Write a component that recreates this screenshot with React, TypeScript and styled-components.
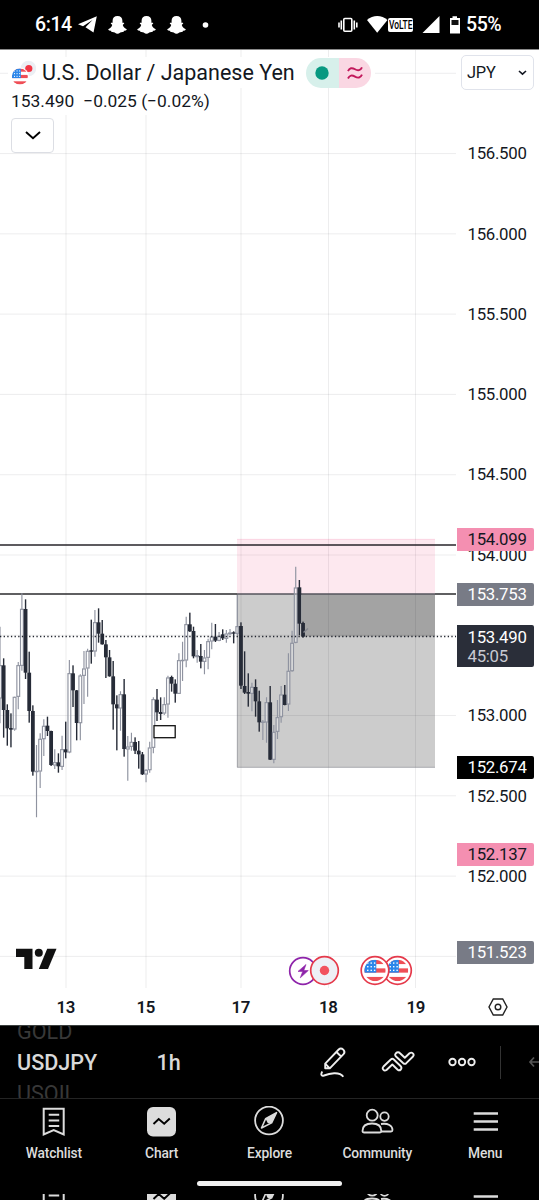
import React from 'react';
import styled, { createGlobalStyle } from 'styled-components';

const GlobalStyle = createGlobalStyle`
  * { box-sizing: border-box; }
  body { margin: 0; background: #000; font-family: Roboto, "Liberation Sans", sans-serif; }
  svg { display: block; flex: none; }
`;

const Screen = styled.main`
  width: 539px;
  height: 1200px;
  display: flex;
  flex-direction: column;
  overflow: hidden;
  background: #000;
`;

const StatusBar = styled.header`
  height: 50px;
  flex: none;
  display: flex;
  align-items: center;
  justify-content: space-between;
  padding: 0 38px 0 35px;
  border-bottom: 1px solid #8a8a8a;
  color: #fff;
`;

const StatusGroup = styled.div<{ $gap: number }>`
  display: flex;
  align-items: center;
  gap: ${p => p.$gap}px;
`;

const StatusText = styled.span<{ $width: number }>`
  width: ${p => p.$width}px;
  font-weight: 500;
  font-size: 19.5px;
  letter-spacing: -0.4px;
  white-space: nowrap;
`;

const VolteBadge = styled.span`
  width: 25px;
  height: 14px;
  margin-left: -3px;
  border-radius: 2px;
  background: #fff;
  color: #000;
  display: flex;
  align-items: center;
  justify-content: center;
`;

const VolteText = styled.span`
  font: 500 12px/14px Roboto, sans-serif;
  transform: scaleX(0.7);
`;

const Chart = styled.section`
  position: relative;
  height: 975px;
  flex: none;
  display: grid;
  grid-template: 938px 37px / 456px 83px;
  background: #fff;
  color: #131722;
`;

const PriceAxis = styled.div`
  position: relative;
  padding-top: 63.4px;
  overflow: hidden;
`;

const PriceLabel = styled.div`
  height: 80.28px;
  padding-left: 11.5px;
  font-size: 16.8px;
  line-height: 80.28px;
  letter-spacing: -0.28px;
`;

const PriceTag = styled.div<{ $top: number; $bg: string; $color: string; $tall?: boolean }>`
  position: absolute;
  left: 1px;
  top: ${p => p.$top}px;
  width: 77px;
  height: ${p => (p.$tall ? 42 : 23)}px;
  padding: ${p => (p.$tall ? 2 : 1)}px 0 0 10.5px;
  border-radius: 0 2px 2px 0;
  background: ${p => p.$bg};
  color: ${p => p.$color};
  font-size: 16.8px;
  line-height: 21px;
  letter-spacing: -0.28px;
`;

const Countdown = styled.div`
  color: #c8cad2;
  line-height: 17px;
  font-size: 16.8px;
`;

const CurrencySelect = styled.button`
  position: absolute;
  left: 461px;
  top: 5px;
  width: 73px;
  height: 35px;
  padding: 0 6px 0 5px;
  display: flex;
  align-items: center;
  justify-content: space-between;
  border: 1px solid #e0e3eb;
  border-radius: 5px;
  background: #fff;
  color: #131722;
  font: 400 16.4px Roboto, sans-serif;
  letter-spacing: -0.2px;
`;

const Legend = styled.div`
  position: absolute;
  left: 8px;
  top: 7px;
  display: flex;
  flex-direction: column;
  align-items: flex-start;
`;

const LegendTitle = styled.div`
  height: 31px;
  display: flex;
  align-items: center;
  padding: 0 4px 0 3px;
  background: #fff;
`;

const SymbolName = styled.span`
  width: 270px;
  padding-left: 6px;
  font-size: 21.5px;
  white-space: nowrap;
`;

const StatusPill = styled.div`
  display: flex;
  width: 65px;
  height: 30px;
  border-radius: 15px;
  overflow: hidden;
`;

const PillHalf = styled.span<{ $bg: string }>`
  flex: 1;
  display: flex;
  align-items: center;
  justify-content: center;
  background: ${p => p.$bg};
`;

const Quote = styled.div`
  height: 27px;
  display: flex;
  gap: 9px;
  padding: 0 4px 0 3px;
  background: #fff;
  font-size: 17.4px;
  line-height: 27px;
  white-space: nowrap;
`;

const CollapseButton = styled.button`
  margin: 3px 0 0 3px;
  width: 43px;
  height: 35px;
  padding: 0;
  display: flex;
  align-items: center;
  justify-content: center;
  border: 1px solid #dcdee4;
  border-radius: 4px;
  background: #fff;
`;

const TimeAxis = styled.div`
  display: grid;
  grid-template-columns: 106px 87.5px 91px 87.5px 84px;
  font-size: 16.8px;
  font-weight: 600;
  line-height: 39px;
  letter-spacing: -0.4px;
`;

const TimeLabel = styled.span<{ $pad: number }>`
  padding-left: ${p => p.$pad}px;
`;

const AxisCorner = styled.div`
  display: flex;
  align-items: center;
  justify-content: center;
`;

const Toolbar = styled.div`
  height: 73px;
  flex: none;
  display: flex;
  align-items: center;
  border-top: 1px solid #3a3f3e;
  color: #d9d9d9;
  overflow: hidden;
`;

const SymbolWheel = styled.div`
  flex: none;
  width: 139px;
  height: 72px;
  padding-left: 17px;
  display: flex;
  flex-direction: column;
  justify-content: center;
  overflow: hidden;
`;

const WheelItem = styled.div<{ $active?: boolean }>`
  flex: none;
  height: 31px;
  font-size: 21.6px;
  line-height: 31px;
  font-weight: ${p => (p.$active ? 500 : 400)};
  color: ${p => (p.$active ? '#d9d9d9' : '#383838')};
`;

const Interval = styled.div`
  flex: none;
  width: 181px;
  padding-left: 17.5px;
  font-size: 21.6px;
  font-weight: 500;
`;

const Tools = styled.div`
  flex: none;
  display: flex;
  align-items: center;
  gap: 33.5px;
`;

const Divider = styled.span`
  flex: none;
  width: 1px;
  height: 33px;
  margin: 0 27px 0 24px;
  background: #333;
`;

const Nav = styled.nav`
  height: 102px;
  flex: none;
  display: flex;
  flex-direction: column;
  border-top: 1px solid #242424;
  color: #dcdcdc;
`;

const NavRow = styled.div`
  display: grid;
  grid-template-columns: repeat(5, 1fr);
  height: 82px;
  flex: none;
  padding-top: 7px;
`;

const NavItem = styled.div`
  display: flex;
  flex-direction: column;
  align-items: center;
`;

const NavLabel = styled.span`
  margin-top: 5px;
  font-size: 13.8px;
  font-weight: 500;
  line-height: 20px;
  letter-spacing: -0.15px;
`;

const HomeBar = styled.div`
  width: 145px;
  height: 5px;
  flex: none;
  margin: 0 auto;
  border-radius: 3px;
  background: #f0f0f0;
`;

const NavEcho = styled.div`
  height: 6px;
  margin-top: 8px;
  overflow: hidden;
`;

const EchoRow = styled.div`
  display: grid;
  grid-template-columns: repeat(5, 1fr);
  justify-items: center;
  margin-top: -13px;
`;

/* Each candle: direction (1 rising, 0 falling), high, body top, body bottom, low. */
type Candle = [number, number, number, number, number];
const sessions: { base: number; candles: Candle[] }[] = [
  {
    base: 560,
    candles: [
      [1, 200, 316, 415, 490], [0, 295, 316, 450, 533], [0, 433, 450, 505, 557], [0, 460, 504, 509, 562],
      [1, 410, 411, 508, 512], [1, 306, 316, 410, 448], [1, 100, 147, 317, 332], [0, 118, 147, 338, 357],
      [0, 275, 338, 453, 488], [0, 436, 453, 635, 647], [1, 555, 633, 636, 772], [1, 520, 537, 634, 684],
      [1, 478, 498, 537, 588], [0, 470, 497, 513, 528], [0, 512, 513, 615, 618], [1, 568, 607, 616, 627],
      [0, 580, 607, 619, 638], [1, 527, 568, 620, 630], [0, 485, 568, 577, 595], [1, 300, 340, 577, 580],
      [0, 316, 340, 391, 441], [0, 390, 391, 489, 541], [1, 343, 347, 489, 541], [1, 273, 326, 347, 432],
      [1, 266, 273, 325, 410], [0, 179, 271, 275, 311], [1, 150, 187, 274, 290], [0, 145, 187, 221, 248],
      [0, 180, 221, 253, 254], [0, 240, 253, 292, 354], [0, 270, 292, 349, 350], [0, 303, 349, 433, 509],
      [0, 406, 433, 445, 571], [1, 394, 403, 445, 512],
    ],
  },
  {
    base: 580,
    candles: [
      [0, 297, 343, 507, 530], [1, 468, 500, 508, 602], [1, 458, 486, 500, 512], [0, 472, 486, 512, 522],
      [0, 483, 512, 523, 566], [0, 516, 523, 583, 585], [1, 568, 570, 583, 607], [1, 485, 503, 570, 578],
      [1, 352, 358, 503, 520], [0, 327, 359, 397, 423], [0, 352, 396, 402, 420], [1, 352, 373, 400, 405],
      [1, 287, 293, 373, 413], [0, 287, 291, 311, 335], [0, 298, 311, 341, 368], [1, 220, 241, 341, 342],
      [1, 185, 240, 242, 303], [1, 110, 133, 241, 262], [0, 98, 133, 154, 156], [0, 140, 153, 229, 235],
      [1, 210, 226, 231, 248], [0, 192, 228, 245, 265], [1, 210, 233, 245, 283], [1, 176, 184, 233, 268],
      [1, 128, 170, 184, 208], [0, 132, 170, 182, 186], [1, 156, 168, 182, 184], [0, 148, 163, 175, 180],
      [1, 150, 161, 176, 188], [1, 147, 158, 162, 165], [0, 154, 157, 161, 190], [1, 45, 139, 161, 165],
    ],
  },
  {
    base: 520,
    candles: [
      [0, 307, 318, 497, 507], [0, 394, 498, 518, 522], [0, 460, 516, 521, 560], [1, 488, 501, 521, 574],
      [0, 478, 501, 544, 590], [0, 512, 544, 607, 635], [1, 600, 605, 608, 660], [1, 532, 547, 607, 668],
      [0, 498, 547, 719, 720], [1, 615, 636, 719, 730], [1, 540, 592, 635, 657], [1, 498, 524, 591, 608],
      [0, 495, 524, 555, 556], [1, 400, 453, 553, 573], [1, 332, 369, 453, 455], [1, 140, 203, 368, 370],
      [0, 180, 202, 311, 346], [0, 305, 309, 350, 353],
    ],
  },
];

const candles = sessions.flatMap(s =>
  s.candles.map(([up, ...ys]) => ({ up: up === 1, ys: ys.map(y => s.base + y / 3) })),
);
const STEP = 3.651;

function Candles() {
  return (
    <g>
      {candles.map(({ up, ys: [high, top, bottom, low] }, i) => {
        const x = i * STEP;
        return up ? (
          <g key={i} stroke="#8f93a0" strokeWidth="1.15" fill="none">
            <path d={`M${x} ${high}V${top}M${x} ${bottom}V${low}`} />
            <rect x={x - 1.4} y={top + 0.3} width={2.8} height={Math.max(bottom - top - 0.6, 0.4)} fill="#ffffff55" />
          </g>
        ) : (
          <g key={i} fill="#262b37">
            <rect x={x - 0.7} y={high} width={1.4} height={low - high} />
            <rect x={x - 1.9} y={top} width={3.8} height={Math.max(bottom - top, 1.3)} />
          </g>
        );
      })}
    </g>
  );
}

function UsFlag({ x, y, r }: { x: number; y: number; r: number }) {
  const id = `us-${x}-${y}`;
  const s = (2 * r) / 5;
  return (
    <g>
      <clipPath id={id}><circle cx={x} cy={y} r={r} /></clipPath>
      <g clipPath={`url(#${id})`}>
        <rect x={x - r} y={y - r} width={2 * r} height={2 * r} fill="#fff" />
        {[0, 2, 4].map(n => (
          <rect key={n} x={x - r} y={y - r + n * s} width={2 * r} height={s} fill="#ef4e56" />
        ))}
        <rect x={x - r} y={y - r} width={r * 1.12} height={3 * s} fill="#2b86ea" />
        {[0, 1, 2].map(a => [0, 1, 2].map(b => (
          <rect key={`${a}${b}`} x={x - r * 0.74 + a * r * 0.32} y={y - r * 0.76 + b * r * 0.34} width={r * 0.13} height={r * 0.13} fill="#fff" />
        )))}
      </g>
    </g>
  );
}

function EventMarkers() {
  return (
    <g>
      <circle cx="303" cy="971" r="13.3" fill="#fff" stroke="#8e24aa" strokeWidth="1.7" />
      <path d="M306 964.5L298 971.4H302.7L300.3 977.8L308.3 970.5H303.8Z" fill="#8e24aa" stroke="#8e24aa" strokeWidth=".6" strokeLinejoin="round" />
      <circle cx="324.5" cy="970.5" r="13.8" fill="#eef0f6" stroke="#e5394a" strokeWidth="1.7" />
      <circle cx="324.5" cy="970.5" r="4.7" fill="#f2525e" />
      <circle cx="397.5" cy="970.5" r="13.8" fill="#fff" stroke="#e5394a" strokeWidth="1.7" />
      <UsFlag x={397.5} y={970.5} r={10.7} />
      <circle cx="375" cy="970.5" r="13.8" fill="#fff" stroke="#e5394a" strokeWidth="1.7" />
      <UsFlag x={375} y={970.5} r={10.7} />
    </g>
  );
}

const gridX = [66, 146, 241, 328.5, 415.5];
const gridY = Array.from({ length: 12 }, (_, i) => 73.3 + i * 80.28);

function Plot() {
  return (
    <svg width="456" height="938" viewBox="0 50 456 938">
      <path
        d={gridX.map(x => `M${x} 50V988`).join('') + gridY.map(y => `M0 ${y}H456`).join('')}
        stroke="#2a2e39" strokeOpacity=".085" fill="none"
      />
      <rect x="237" y="539" width="198" height="55" fill="#e91e63" fillOpacity=".1" />
      <path d="M237 539.3H435" stroke="#e91e63" strokeOpacity=".1" />
      <rect x="237" y="594" width="198" height="173.5" fill="#000" fillOpacity=".2" />
      <path d="M237.3 594V767.3H435" stroke="#787b86" strokeOpacity=".5" fill="none" />
      <rect x="302" y="594" width="133" height="42.5" fill="#000" fillOpacity=".2" />
      <path d="M0 545H456" stroke="#27242a" strokeWidth="1.6" />
      <path d="M0 594H237M435 594H456" stroke="#2b2b2e" strokeWidth="1.6" />
      <path d="M237 594H435" stroke="#55555c" strokeWidth="1.5" />
      <Candles />
      <path d="M303.5 632.5L308 628.5" stroke="#85878f" strokeWidth="1.5" />
      <path d="M0 636.5H456" stroke="#20242e" strokeWidth="1.4" strokeDasharray="1.3 2.34" />
      <rect x="154" y="725.7" width="21.2" height="12" fill="#fff" stroke="#111" strokeWidth="1.3" />
      <g fill="#111">
        <path d="M16 948.7H32.5V969H24.3V957H16Z" />
        <circle cx="38.8" cy="952.7" r="4" />
        <path d="M47.2 948.7H56.5L48 969H38.8Z" />
      </g>
      <EventMarkers />
    </svg>
  );
}

function Ghost() {
  return (
    <svg width="19" height="18" viewBox="0 0 19 18">
      <path fill="#fff" d="M9.5 0C12.6 0 14.4 2 14.4 4.8V6.8C15.2 6.6 16 6.6 16.2 7.1C16.3 7.9 14.9 8.3 14.8 9C15 10.9 17 12.6 18.8 13.2C18.7 14.3 17 14.6 15.9 14.8L15.5 16C14.2 15.9 13.2 15.9 12.3 16.6C10.3 18.2 8.7 18.2 6.7 16.6C5.8 15.9 4.8 15.9 3.5 16L3.1 14.8C2 14.6.3 14.3.2 13.2C2 12.6 4 10.9 4.2 9C4.1 8.3 2.7 7.9 2.8 7.1C3 6.6 3.8 6.6 4.6 6.8V4.8C4.6 2 6.4 0 9.5 0Z" />
    </svg>
  );
}

function PairFlag() {
  return (
    <svg width="25" height="27" viewBox="0 0 25 27">
      <circle cx="17.4" cy="9.5" r="7.8" fill="#eceff4" />
      <circle cx="17.8" cy="9.5" r="3.6" fill="#f23645" />
      <circle cx="8.9" cy="17.5" r="9" fill="#fff" />
      <UsFlag x={8.9} y={17.5} r={8} />
    </svg>
  );
}

const navIcons: { label: string; icon: React.ReactNode }[] = [
  {
    label: 'Watchlist',
    icon: (
      <g fill="none" stroke="currentColor" strokeWidth="2">
        <path d="M6.7 2.8H26.7V28.5L16.7 24.2L6.7 28.5Z" />
        <path d="M11.7 8.8H22.2M11.7 14.5H22.2M11.7 20H22.2" />
      </g>
    ),
  },
  {
    label: 'Chart',
    icon: (
      <g>
        <rect x="2" y="1" width="29" height="29.5" rx="6" fill="currentColor" />
        <path d="M8.5 18L13.7 13L19.2 17.8L24.8 12.5" fill="none" stroke="#000" strokeWidth="1.9" />
      </g>
    ),
  },
  {
    label: 'Explore',
    icon: (
      <g>
        <circle cx="16" cy="14.5" r="13.9" fill="none" stroke="currentColor" strokeWidth="1.8" />
        <path d="M23.5 6.7L18.6 16.9L8.5 22L12.6 12.7Z" fill="none" stroke="currentColor" strokeWidth="1.6" strokeLinejoin="round" />
        <path d="M23.5 6.7L18.6 16.9L14.8 17.2L12.6 12.7Z" fill="currentColor" />
      </g>
    ),
  },
  {
    label: 'Community',
    icon: (
      <g fill="none" stroke="currentColor" strokeWidth="1.8">
        <circle cx="11.2" cy="9.2" r="5.5" />
        <circle cx="23.5" cy="10.6" r="4.2" />
        <path d="M1.5 25C1.5 20 5 17.5 11 17.5S20.3 20 20.3 25C20.3 26 19.5 26.5 18.5 26.5H3.3C2.3 26.5 1.5 26 1.5 25Z" />
        <path d="M20 18C27 17 31.5 19.5 31.5 24C31.5 25.1 31 25.5 30 25.5H20.3" />
      </g>
    ),
  },
  {
    label: 'Menu',
    icon: <path d="M4.7 7.5H29M4.7 15.5H29M4.7 23.5H29" stroke="currentColor" strokeWidth="2.4" />,
  },
];

function NavIcon({ children }: { children: React.ReactNode }) {
  return <svg width="33" height="32" viewBox="0 0 33 32">{children}</svg>;
}

const prices = ['156.500', '156.000', '155.500', '155.000', '154.500', '154.000', '', '153.000', '152.500', '152.000'];

export default function App() {
  return (
    <Screen>
      <GlobalStyle />
      <StatusBar>
        <StatusGroup $gap={10.5}>
          <StatusGroup $gap={6}>
            <StatusText $width={37}>6:14</StatusText>
            <svg width="19" height="17" viewBox="0 0 19 17">
              <path d="M18.8.2L0 8.2L5 10.3L14.5 4L7.5 11.3L15.5 16.6Z" fill="#fff" />
            </svg>
          </StatusGroup>
          <Ghost />
          <Ghost />
          <Ghost />
          <svg width="24" height="18"><circle cx="9.5" cy="9" r="2.8" fill="#fff" /></svg>
        </StatusGroup>
        <StatusGroup $gap={9}>
          <svg width="20" height="16" viewBox="0 0 20 16" fill="none" stroke="#fff" strokeWidth="1.6">
            <rect x="5.8" y="1.5" width="8" height="12.8" rx="1" />
            <path d="M3.3 3.5V12.5M1 5.5V10.5M16.3 3.5V12.5M18.8 5.5V10.5" />
          </svg>
          <StatusGroup $gap={3}>
            <svg width="21" height="17" viewBox="0 0 21 17">
              <path d="M0 4C6-1.3 14.5-1.3 20.5 4L10.2 16.8Z" fill="#fff" />
            </svg>
            <VolteBadge><VolteText>VoLTE</VolteText></VolteBadge>
          </StatusGroup>
          <svg width="18" height="17"><path d="M17.5 0V17H.5Z" fill="#fff" /></svg>
          <StatusGroup $gap={5}>
            <svg width="12" height="18" viewBox="0 0 12 18">
              <path d="M1 2H3.5V.3H8V2H11V17.5H1Z" fill="#fff" />
              <rect x="2.5" y="4" width="7" height="5" fill="#111" />
            </svg>
            <StatusText $width={35}>55%</StatusText>
          </StatusGroup>
        </StatusGroup>
      </StatusBar>

      <Chart>
        <Plot />
        <PriceAxis>
          {prices.map((p, i) => <PriceLabel key={i}>{p}</PriceLabel>)}
          <PriceTag $top={478} $bg="#f48fb1" $color="#131722">154.099</PriceTag>
          <PriceTag $top={533} $bg="#787b86" $color="#fff">153.753</PriceTag>
          <PriceTag $top={575} $bg="#2a2e39" $color="#fff" $tall>
            153.490
            <Countdown>45:05</Countdown>
          </PriceTag>
          <PriceTag $top={706} $bg="#000" $color="#fff">152.674</PriceTag>
          <PriceTag $top={793} $bg="#f48fb1" $color="#131722">152.137</PriceTag>
          <PriceTag $top={891} $bg="#787b86" $color="#fff">151.523</PriceTag>
        </PriceAxis>
        <TimeAxis>
          <TimeLabel $pad={56.5}>13</TimeLabel>
          <TimeLabel $pad={30.5}>15</TimeLabel>
          <TimeLabel $pad={38}>17</TimeLabel>
          <TimeLabel $pad={34.5}>18</TimeLabel>
          <TimeLabel $pad={34.5}>19</TimeLabel>
        </TimeAxis>
        <AxisCorner>
          <svg width="20" height="18" viewBox="0 0 20 18" fill="none" stroke="#222" strokeWidth="1.4">
            <path d="M5.3 1H14.7L19 9L14.7 17H5.3L1 9Z" />
            <circle cx="10" cy="9" r="2.8" />
          </svg>
        </AxisCorner>
        <Legend>
          <LegendTitle>
            <PairFlag />
            <SymbolName>U.S. Dollar / Japanese Yen</SymbolName>
            <StatusPill>
              <PillHalf $bg="#d7f0eb"><svg width="14" height="14"><circle cx="7" cy="7" r="6.7" fill="#089981" /></svg></PillHalf>
              <PillHalf $bg="#fad7e3">
                <svg width="16" height="14" viewBox="0 0 16 14" fill="none" stroke="#c2185b" strokeWidth="1.9">
                  <path d="M1 5.2C2.5 1.8 5 1.5 8 3.3S13.5 4.5 15 1.3M1 12.5C2.5 9.1 5 8.8 8 10.6S13.5 11.8 15 8.6" />
                </svg>
              </PillHalf>
            </StatusPill>
          </LegendTitle>
          <Quote><span>153.490</span><span>−0.025 (−0.02%)</span></Quote>
          <CollapseButton>
            <svg width="16" height="9" fill="none" stroke="#000" strokeWidth="1.9"><path d="M1 1L8 7.3L15 1" /></svg>
          </CollapseButton>
        </Legend>
        <CurrencySelect>
          JPY
          <svg width="9" height="6" fill="none" stroke="#131722" strokeWidth="1.6"><path d="M1 1L4.5 4.2L8 1" /></svg>
        </CurrencySelect>
      </Chart>

      <Toolbar>
        <SymbolWheel>
          <WheelItem>GOLD</WheelItem>
          <WheelItem $active>USDJPY</WheelItem>
          <WheelItem>USOIL</WheelItem>
        </SymbolWheel>
        <Interval>1h</Interval>
        <Tools>
          <svg width="27" height="32" viewBox="0 0 27 32" fill="none" stroke="#eee" strokeWidth="1.9" strokeLinejoin="round">
            <path d="M5.2 17.7L18.7 3.5C20.2 2 22 2.4 23.3 3.6C24.6 4.9 24.8 6.7 23.5 8.2L9.8 22.3H5.2ZM16.5 6L21.3 10.7M5.2 17.7L9.8 22.3" />
            <path d="M2.3 25.5C.5 28.5 1.3 30.5 4 29.5C9 27.5 19.5 25 23.3 30.8" />
          </svg>
          <svg width="34" height="22" viewBox="0 0 34 22" fill="none" stroke="#eee" strokeWidth="1.9" strokeLinejoin="round">
            <path d="M2.5 15.5L9.8 8.5Q11.3 7.2 12.8 8.5L19.8 15.3C21.5 17.5 19 20.5 16.7 18.7L11.3 13.5L5.5 19C3 20.7.5 17.8 2.5 15.5Z" />
            <path d="M14.7 2.5C16.5.7 18.3 1.5 19.3 2.5L23.8 6.8L28.5 2.3C31 .5 33.8 3.2 32 5.5L25.3 12.2Q23.8 13.5 22.3 12.2L15 5.5Q13.5 4 14.7 2.5Z" />
          </svg>
          <svg width="28" height="10" fill="none" stroke="#eee" strokeWidth="1.9">
            <circle cx="4.5" cy="5" r="3.2" /><circle cx="14" cy="5" r="3.2" /><circle cx="23.5" cy="5" r="3.2" />
          </svg>
        </Tools>
        <Divider />
        <svg width="12" height="12" fill="none" stroke="#555" strokeWidth="1.7"><path d="M6 1.5L2 6L6 10.5M2 6H12" /></svg>
      </Toolbar>

      <Nav>
        <NavRow>
          {navIcons.map(n => (
            <NavItem key={n.label}>
              <NavIcon>{n.icon}</NavIcon>
              <NavLabel>{n.label}</NavLabel>
            </NavItem>
          ))}
        </NavRow>
        <HomeBar />
        <NavEcho>
          <EchoRow>
            {navIcons.map(n => <NavIcon key={n.label}>{n.icon}</NavIcon>)}
          </EchoRow>
        </NavEcho>
      </Nav>
    </Screen>
  );
}
